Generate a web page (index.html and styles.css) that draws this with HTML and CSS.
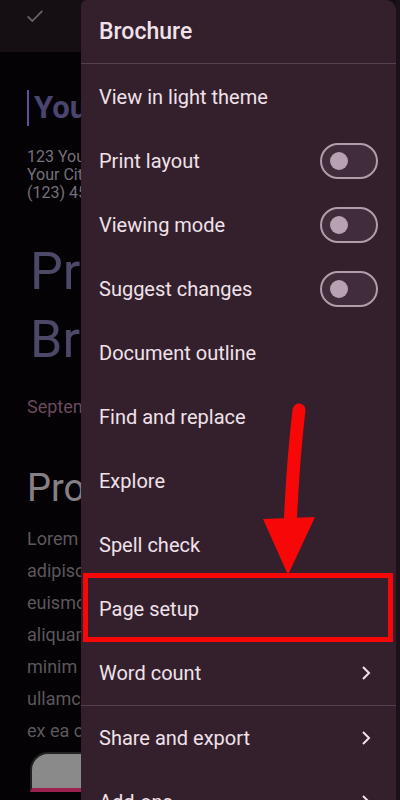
FILE: index.html
```html
<!DOCTYPE html>
<html lang="en">
  <head>
    <meta charset="UTF-8" />
    <meta name="viewport" content="width=device-width, initial-scale=1.0" />
    <title>Brochure</title>
    <link rel="stylesheet" href="styles.css">
  </head>
  <body>
    <div class="screen">
      <!-- Document behind the menu -->
      <div class="doc">
        <div class="toolbar">
          <svg class="check" width="22" height="22" viewBox="0 0 24 24">
            <path d="M4 12.5l5 5L20 6.5" fill="none" stroke="currentColor" stroke-width="2" />
          </svg>
        </div>
        <div class="doc-body">
          <div class="doc-title"><span class="cursor"></span>Your Company</div>
          <div class="address">
            <div>123 Your Street</div>
            <div>Your City, ST 12345</div>
            <div>(123) 456-7890</div>
          </div>
          <h1 class="doc-heading">Product<br>Brochure</h1>
          <div class="doc-date">September 04, 20XX</div>
          <h2 class="doc-section">Product Overview</h2>
          <p class="doc-text">
            Lorem ipsum dolor sit amet, consectetuer<br>
            adipiscing elit, sed diam nonummy nibh<br>
            euismod tincidunt ut laoreet dolore magna<br>
            aliquam erat volutpat. Ut wisi enim ad<br>
            minim veniam, quis nostrud exerci tation<br>
            ullamcorper suscipit lobortis nisl ut aliquip<br>
            ex ea commodo consequat.
          </p>
          <div class="doc-image"></div>
        </div>
      </div>

      <!-- Overflow menu -->
      <div class="menu">
        <div class="menu-title">Brochure</div>
        <div class="divider"></div>
        <ul class="menu-list">
          <li class="menu-item">View in light theme</li>
          <li class="menu-item">Print layout <span class="toggle"></span></li>
          <li class="menu-item">Viewing mode <span class="toggle"></span></li>
          <li class="menu-item">Suggest changes <span class="toggle"></span></li>
          <li class="menu-item">Document outline</li>
          <li class="menu-item">Find and replace</li>
          <li class="menu-item">Explore</li>
          <li class="menu-item">Spell check</li>
          <li class="menu-item">Page setup</li>
          <li class="menu-item">Word count
            <svg class="chevron" width="12" height="16" viewBox="0 0 12 16"><path d="M3 2l6 6-6 6" /></svg>
          </li>
        </ul>
        <div class="divider"></div>
        <ul class="menu-list">
          <li class="menu-item">Share and export
            <svg class="chevron" width="12" height="16" viewBox="0 0 12 16"><path d="M3 2l6 6-6 6" /></svg>
          </li>
          <li class="menu-item">Add-ons
            <svg class="chevron" width="12" height="16" viewBox="0 0 12 16"><path d="M3 2l6 6-6 6" /></svg>
          </li>
        </ul>
      </div>

      <!-- Annotation -->
      <div class="highlight"></div>
      <svg class="arrow" width="400" height="800" viewBox="0 0 400 800">
        <path d="M299 410 Q293 460 290 528" fill="none" stroke="#f70707" stroke-width="13" stroke-linecap="round" />
        <polygon points="263,519 315,517 288,575" fill="#f70707" />
      </svg>
    </div>
  </body>
</html>
```

FILE: styles.css
```css
* {
  margin: 0;
  padding: 0;
  box-sizing: border-box;
}

body {
  font-family: Roboto, "Liberation Sans", sans-serif;
  background-color: #050205;
}

.screen {
  position: relative;
  width: 400px;
  height: 800px;
  overflow: hidden;
  background-color: #1c1118;
}

/* Document (only the strip left of the menu is visible) */
.doc {
  width: 396px;
  height: 800px;
  background-color: #050205;
  overflow: hidden;
  white-space: nowrap;
}

.toolbar {
  height: 52px;
  background-color: #150e13;
  padding: 5px 0 0 24px;
}

.check {
  color: #6f6069;
}

.doc-body {
  width: 81px;
  overflow: hidden;
  padding-left: 27px;
}

.doc-title {
  margin-top: 38px;
  font-size: 31px;
  line-height: 36px;
  font-weight: 700;
  color: #4a4470;
  display: flex;
  align-items: center;
}

.cursor {
  flex-shrink: 0;
  width: 2px;
  height: 36px;
  margin-right: 5px;
  background-color: #5a50a0;
}

.address {
  margin-top: 22px;
  font-size: 16px;
  line-height: 18px;
  color: #76707a;
}

.doc-heading {
  margin-top: 36px;
  padding-left: 3px;
  font-size: 52px;
  line-height: 68px;
  font-weight: 400;
  color: #4c4868;
}

.doc-date {
  margin-top: 23px;
  font-size: 18px;
  line-height: 20px;
  color: #6a4a5c;
}

.doc-section {
  margin-top: 51px;
  font-size: 38px;
  line-height: 40px;
  font-weight: 400;
  color: #858086;
}

.doc-text {
  margin-top: 15px;
  font-size: 18px;
  line-height: 32px;
  color: #5c575c;
}

.doc-image {
  margin: 5px 0 0 3px;
  width: 60px;
  height: 40px;
  background-color: #8a8a8a;
  border-top: 2px solid #222;
  border-left: 2px solid #222;
  border-radius: 18px 0 0 0;
  border-bottom: 4px solid #9c2050;
}

/* Menu */
.menu {
  position: absolute;
  top: 0;
  left: 81px;
  width: 315px;
  height: 840px;
  background-color: #33202c;
  border-radius: 6px 10px 0 0;
  color: #f1e1ea;
}

.menu-title {
  height: 63px;
  padding-left: 18px;
  display: flex;
  align-items: center;
  font-size: 23px;
  font-weight: 500;
}

.divider {
  height: 1px;
  background-color: #54404e;
}

.menu-list {
  list-style: none;
}

.menu-list:first-of-type {
  padding-top: 1px;
}

.menu-item {
  height: 64px;
  padding: 0 18px;
  display: flex;
  align-items: center;
  justify-content: space-between;
  font-size: 20px;
}

.toggle {
  position: relative;
  width: 58px;
  height: 36px;
  border: 2px solid #b39bab;
  border-radius: 18px;
  background-color: #402c3a;
}

.toggle::after {
  content: "";
  position: absolute;
  top: 7px;
  left: 8px;
  width: 18px;
  height: 18px;
  border-radius: 50%;
  background-color: #b8a1b1;
}

.chevron {
  margin-right: 6px;
  fill: none;
  stroke: #f1e1ea;
  stroke-width: 2;
}

/* Annotation overlay */
.highlight {
  position: absolute;
  left: 83px;
  top: 573px;
  width: 310px;
  height: 69px;
  border: 5px solid #f70707;
}

.arrow {
  position: absolute;
  top: 0;
  left: 0;
}
```
